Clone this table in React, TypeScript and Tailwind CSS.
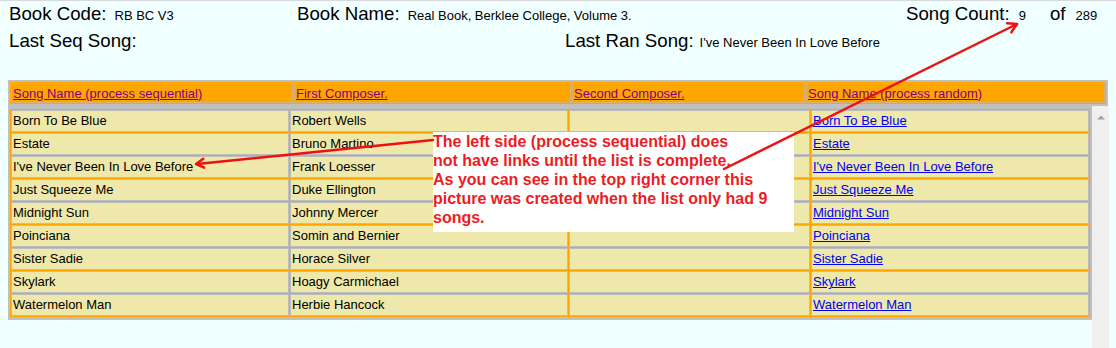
import React from "react";

const sequential = [
  ["Born To Be Blue", "Robert Wells"],
  ["Estate", "Bruno Martino"],
  ["I've Never Been In Love Before", "Frank Loesser"],
  ["Just Squeeze Me", "Duke Ellington"],
  ["Midnight Sun", "Johnny Mercer"],
  ["Poinciana", "Somin and Bernier"],
  ["Sister Sadie", "Horace Silver"],
  ["Skylark", "Hoagy Carmichael"],
  ["Watermelon Man", "Herbie Hancock"],
];

const headers = [
  "Song Name (process sequential)",
  "First Composer.",
  "Second Composer.",
  "Song Name (process random)",
];

const big = "text-[18.67px] text-black";
const small = "text-[13px] text-black";

export default function App() {
  return (
    <div
      className="relative h-[348px] w-[1116px] overflow-hidden bg-[#f0ffff]"
      style={{ fontFamily: '"Liberation Sans", Arial, sans-serif' }}
    >
      <div className="h-px bg-[#d9d9d9]" />

      {/* book summary */}
      <div className="flex h-[26px] items-baseline pl-[9px] leading-[26px] whitespace-nowrap">
        <div className="w-[288px]">
          <span className={big}>Book Code:</span>
          <span className={`${small} ml-2`}>RB BC V3</span>
        </div>
        <div className="w-[609px]">
          <span className={big}>Book Name:</span>
          <span className={`${small} ml-2`}>Real Book, Berklee College, Volume 3.</span>
        </div>
        <div>
          <span className={big}>Song Count:</span>
          <span className={`${small} ml-[9px]`}>9</span>
          <span className={`${big} ml-[24px]`}>of</span>
          <span className={`${small} ml-[10px]`}>289</span>
        </div>
      </div>
      <div className="flex h-[27px] items-baseline pl-[9px] leading-[27px] whitespace-nowrap">
        <div className="w-[556px]">
          <span className={big}>Last Seq Song:</span>
        </div>
        <div>
          <span className={big}>Last Ran Song:</span>
          <span className={`${small} ml-[6px]`}>I've Never Been In Love Before</span>
        </div>
      </div>

      {/* column headers */}
      <div className="ml-[8px] mt-[26px] w-[1100px] bg-[#c0c0c0] px-[2px] pt-[2px] pb-[2px]">
        <div className="grid grid-cols-[282px_277px_233px_299px] gap-px bg-[#ffa500] p-px">
          {headers.map((h) => (
            <div
              key={h}
              className="flex h-[20px] items-center border border-[#dbb46c] bg-[#ffa500] pl-px text-[13px] leading-none whitespace-nowrap text-[#800080] underline"
            >
              {h}
            </div>
          ))}
        </div>
      </div>

      {/* song list with scrollbar */}
      <div className="ml-[8px] flex h-[242px] w-[1101px]">
        <div className="w-[1084px]">
          <div className="bg-[#c0c0c0] px-[2px] pt-[3px] pb-[3px]">
            <div className="grid grid-cols-[278px_278px_241px_278px] gap-px bg-[#ffa500] p-px">
              {sequential.map(([song, composer]) => (
                <React.Fragment key={song}>
                  <div className="flex h-[22px] items-center border border-[#bdbdbd] bg-[#eee8aa] pl-px text-[13px] whitespace-nowrap text-black">
                    {song}
                  </div>
                  <div className="flex h-[22px] items-center border border-[#bdbdbd] bg-[#eee8aa] pl-px text-[13px] whitespace-nowrap text-black">
                    {composer}
                  </div>
                  <div className="h-[22px] border border-[#bdbdbd] bg-[#eee8aa]" />
                  <div className="flex h-[22px] items-center border border-[#bdbdbd] bg-[#eee8aa] pl-px text-[13px] whitespace-nowrap">
                    <a href="#" className="text-[#0000ee] underline">
                      {song}
                    </a>
                  </div>
                </React.Fragment>
              ))}
            </div>
          </div>
        </div>
        <div className="flex w-[17px] justify-center bg-[#f0f0f0] pt-[9px]">
          <svg width="8" height="5" viewBox="0 0 8 5">
            <polygon points="0,4.5 4,0.5 8,4.5" fill="#a3a3a3" />
          </svg>
        </div>
      </div>

      {/* note box */}
      <div className="absolute left-[433px] top-[132px] h-[100px] w-[361px] bg-white text-[16px] leading-[19px] font-bold text-[#ed1c24]">
        The left side (process sequential) does
        <br />
        not have links until the list is complete.
        <br />
        As you can see in the top right corner this
        <br />
        picture was created when the list only had 9
        <br />
        songs.
      </div>

      {/* pointer arrows */}
      <svg
        className="pointer-events-none absolute left-0 top-0"
        width="1116"
        height="348"
        viewBox="0 0 1116 348"
      >
        <g stroke="#ee1111" strokeWidth="2.5" fill="none" strokeLinecap="round" strokeLinejoin="round">
          <line x1="433" y1="140" x2="197" y2="164" />
          <polyline points="204.2,167.7 196,164 203.3,158.7" />
          <line x1="724" y1="169" x2="1017" y2="24" />
          <polyline points="1007,23.3 1017,24 1011.4,32.3" />
        </g>
      </svg>
    </div>
  );
}
